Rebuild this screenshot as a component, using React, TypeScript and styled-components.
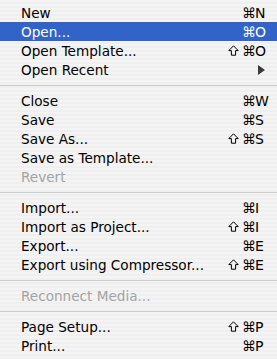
import React from 'react'
import styled, { createGlobalStyle } from 'styled-components'

const GlobalStyle = createGlobalStyle`
  html, body {
    margin: 0;
    padding: 0;
    background: #f2f2f2;
  }
`

const MenuPanel = styled.div`
  width: 277px;
  height: 359px;
  box-sizing: border-box;
  padding: 3px 0 4px 0;
  overflow: hidden;
  font-family: 'DejaVu Sans', 'Liberation Sans', sans-serif;
  font-size: 13.6px;
  color: #000;
  background: repeating-linear-gradient(
    to bottom,
    #f4f4f4 0px,
    #f4f4f4 2px,
    #efefef 2px,
    #efefef 4px
  );
`

const Row = styled.div<{ $active?: boolean; $disabled?: boolean }>`
  height: 19px;
  display: flex;
  align-items: center;
  padding: 0 12px 0 21px;
  background: ${p => (p.$active ? '#3163c8' : 'transparent')};
  color: ${p => (p.$active ? '#fff' : p.$disabled ? '#a3a3a3' : '#000')};
`

const Label = styled.span`
  flex: 1;
  white-space: nowrap;
`

const Shortcut = styled.span`
  display: grid;
  grid-template-columns: 14px 13px 10px;
  align-items: center;
  font-size: 14px;
`

const ShiftIcon = styled.svg`
  display: block;
  width: 11px;
  height: 11px;
`

const Cmd = styled.span`
  text-align: left;
  font-size: 14px;
  line-height: 1;
`

const Key = styled.span`
  text-align: left;
  white-space: nowrap;
`

const Arrow = styled.span`
  width: 0;
  height: 0;
  margin-right: 0;
  border-top: 5px solid transparent;
  border-bottom: 5px solid transparent;
  border-left: 7px solid #3a3a3a;
`

const Separator = styled.div`
  height: 12px;
  display: flex;
  align-items: center;

  &::after {
    content: '';
    flex: 1;
    height: 1px;
    background: #cbcbcb;
  }
`

type Item =
  | { sep: true }
  | {
      label: string
      shift?: boolean
      key?: string
      active?: boolean
      disabled?: boolean
      submenu?: boolean
    }

const items: Item[] = [
  { label: 'New', key: 'N' },
  { label: 'Open...', key: 'O', active: true },
  { label: 'Open Template...', key: 'O', shift: true },
  { label: 'Open Recent', submenu: true },
  { sep: true },
  { label: 'Close', key: 'W' },
  { label: 'Save', key: 'S' },
  { label: 'Save As...', key: 'S', shift: true },
  { label: 'Save as Template...' },
  { label: 'Revert', disabled: true },
  { sep: true },
  { label: 'Import...', key: 'I' },
  { label: 'Import as Project...', key: 'I', shift: true },
  { label: 'Export...', key: 'E' },
  { label: 'Export using Compressor...', key: 'E', shift: true },
  { sep: true },
  { label: 'Reconnect Media...', disabled: true },
  { sep: true },
  { label: 'Page Setup...', key: 'P', shift: true },
  { label: 'Print...', key: 'P' },
]

const Shift = () => (
  <ShiftIcon viewBox='0 0 11 11'>
    <path
      d='M5.5 0.8 L10.2 5.6 H7.6 V10.2 H3.4 V5.6 H0.8 Z'
      fill='none'
      stroke='currentColor'
      strokeWidth='1'
      strokeLinejoin='miter'
    />
  </ShiftIcon>
)

const App: React.FC = () => {
  return (
    <>
      <GlobalStyle />
      <MenuPanel>
        {items.map((item, i) => {
          if ('sep' in item) return <Separator key={i} />
          return (
            <Row key={i} $active={item.active} $disabled={item.disabled}>
              <Label>{item.label}</Label>
              {item.submenu && <Arrow />}
              {item.key && (
                <Shortcut>
                  <span>{item.shift && <Shift />}</span>
                  <Cmd>⌘</Cmd>
                  <Key>{item.key}</Key>
                </Shortcut>
              )}
            </Row>
          )
        })}
      </MenuPanel>
    </>
  )
}

export default App
